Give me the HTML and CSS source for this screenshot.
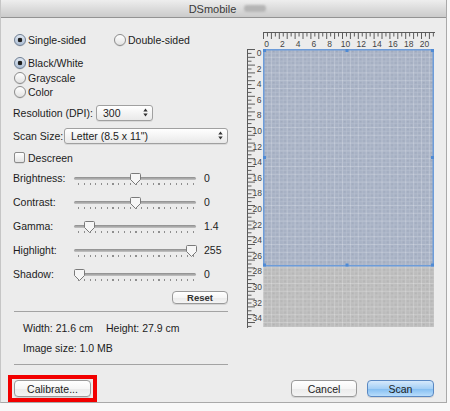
FILE: index.html
```html
<!DOCTYPE html>
<html>
<head>
<meta charset="utf-8">
<link rel="stylesheet" href="styles.css">
</head>
<body>
<div class="window">
  <div class="titlebar"><span class="title">DSmobile</span><span class="blur"></span></div>
  <div class="main">
    <div class="left">
      <div class="row sides">
        <label class="opt w100"><span class="radio on"></span>Single-sided</label>
        <label class="opt"><span class="radio"></span>Double-sided</label>
      </div>
      <div class="group">
        <label class="opt grp"><span class="radio on"></span>Black/White</label>
        <label class="opt grp"><span class="radio"></span>Grayscale</label>
        <label class="opt grp"><span class="radio"></span>Color</label>
      </div>
      <div class="row field res">
        <span class="flabel res-label">Resolution (DPI):</span>
        <div class="popup res-pop"><span>300</span><svg class="arrows" width="5" height="9" viewBox="0 0 5 9"><path d="M0.3 3.6 L2.5 0.4 L4.7 3.6 Z M0.3 5.4 L2.5 8.6 L4.7 5.4 Z"/></svg></div>
      </div>
      <div class="row field size">
        <span class="flabel size-label">Scan Size:</span>
        <div class="popup size-pop"><span>Letter (8.5 x 11")</span><svg class="arrows" width="5" height="9" viewBox="0 0 5 9"><path d="M0.3 3.6 L2.5 0.4 L4.7 3.6 Z M0.3 5.4 L2.5 8.6 L4.7 5.4 Z"/></svg></div>
      </div>
      <label class="row check"><span class="box"></span>Descreen</label>
      <div class="sliders">
        <div class="srow"><span class="slabel">Brightness:</span><div class="slider"><div class="track"></div><div class="ticks"></div><svg class="knob" style="left:55.5px" width="11" height="12" viewBox="0 0 11 12"><path d="M1.5 0.5 H9.5 A1 1 0 0 1 10.5 1.5 V6.5 L5.5 11.5 L0.5 6.5 V1.5 A1 1 0 0 1 1.5 0.5 Z"/></svg></div><span class="sval">0</span></div>
        <div class="srow"><span class="slabel">Contrast:</span><div class="slider"><div class="track"></div><div class="ticks"></div><svg class="knob" style="left:55.5px" width="11" height="12" viewBox="0 0 11 12"><path d="M1.5 0.5 H9.5 A1 1 0 0 1 10.5 1.5 V6.5 L5.5 11.5 L0.5 6.5 V1.5 A1 1 0 0 1 1.5 0.5 Z"/></svg></div><span class="sval">0</span></div>
        <div class="srow"><span class="slabel">Gamma:</span><div class="slider"><div class="track"></div><div class="ticks"></div><svg class="knob" style="left:9.5px" width="11" height="12" viewBox="0 0 11 12"><path d="M1.5 0.5 H9.5 A1 1 0 0 1 10.5 1.5 V6.5 L5.5 11.5 L0.5 6.5 V1.5 A1 1 0 0 1 1.5 0.5 Z"/></svg></div><span class="sval">1.4</span></div>
        <div class="srow"><span class="slabel">Highlight:</span><div class="slider"><div class="track"></div><div class="ticks"></div><svg class="knob" style="left:111.5px" width="11" height="12" viewBox="0 0 11 12"><path d="M1.5 0.5 H9.5 A1 1 0 0 1 10.5 1.5 V6.5 L5.5 11.5 L0.5 6.5 V1.5 A1 1 0 0 1 1.5 0.5 Z"/></svg></div><span class="sval">255</span></div>
        <div class="srow"><span class="slabel">Shadow:</span><div class="slider"><div class="track"></div><div class="ticks"></div><svg class="knob" style="left:-0.5px" width="11" height="12" viewBox="0 0 11 12"><path d="M1.5 0.5 H9.5 A1 1 0 0 1 10.5 1.5 V6.5 L5.5 11.5 L0.5 6.5 V1.5 A1 1 0 0 1 1.5 0.5 Z"/></svg></div><span class="sval">0</span></div>
      </div>
      <button class="btn reset">Reset</button>
      <div class="sep sep1"></div>
      <div class="info first"><span class="iw">Width: 21.6 cm</span><span>Height: 27.9 cm</span></div>
      <div class="info second">Image size: 1.0 MB</div>
      <div class="sep sep2"></div>
    </div>
    <div class="preview">
      <svg width="200" height="305" viewBox="0 0 200 305">
        <defs>
          <pattern id="tt" x="23" y="5" width="7.9" height="8" patternUnits="userSpaceOnUse">
            <rect x="0" y="0" width="1" height="6" fill="#5a5a5a"/>
            <rect x="3.95" y="0" width="1" height="3.5" fill="#5a5a5a"/>
          </pattern>
          <pattern id="lt" x="8" y="21" width="9" height="7.8" patternUnits="userSpaceOnUse">
            <rect x="0" y="0" width="7" height="1" fill="#5a5a5a"/>
            <rect x="0" y="3.9" width="3.5" height="1" fill="#5a5a5a"/>
          </pattern>
          <pattern id="grid" x="23" y="21" width="7.9" height="7.8" patternUnits="userSpaceOnUse">
            <rect x="0" y="0" width="7.9" height="1" fill="#ffffff" fill-opacity="0.22"/>
            <rect x="0" y="0" width="1" height="7.8" fill="#ffffff" fill-opacity="0.22"/>
            <rect x="1" y="3.9" width="6.9" height="1" fill="#ffffff" fill-opacity="0.09"/>
            <rect x="3.95" y="1" width="1" height="6.8" fill="#ffffff" fill-opacity="0.09"/>
            <rect x="2" y="2" width="1.5" height="1" fill="#000000" fill-opacity="0.06"/>
            <rect x="5.5" y="5.5" width="1.5" height="1" fill="#000000" fill-opacity="0.06"/>
          </pattern>
        </defs>
        <rect x="23" y="4" width="172" height="1" fill="#5a5a5a"/>
        <rect x="23" y="5" width="172" height="6" fill="url(#tt)"/>
        <g class="rnum" text-anchor="middle">
          <text x="26.5" y="18.5">0</text>
          <text x="42.3" y="18.5">2</text>
          <text x="58.1" y="18.5">4</text>
          <text x="73.9" y="18.5">6</text>
          <text x="89.7" y="18.5">8</text>
          <text x="105.5" y="18.5">10</text>
          <text x="121.3" y="18.5">12</text>
          <text x="137.1" y="18.5">14</text>
          <text x="152.9" y="18.5">16</text>
          <text x="168.7" y="18.5">18</text>
          <text x="184.5" y="18.5">20</text>
        </g>
        <rect x="7" y="21" width="1" height="279" fill="#5a5a5a"/>
        <rect x="8" y="21" width="8" height="279" fill="url(#lt)"/>
        <g class="rnum" text-anchor="end">
          <text x="21.5" y="28">0</text>
          <text x="21.5" y="43.6">2</text>
          <text x="21.5" y="59.2">4</text>
          <text x="21.5" y="74.8">6</text>
          <text x="21.5" y="90.4">8</text>
          <text x="22" y="106">10</text>
          <text x="22" y="121.6">12</text>
          <text x="22" y="137.2">14</text>
          <text x="22" y="152.8">16</text>
          <text x="22" y="168.4">18</text>
          <text x="22" y="184">20</text>
          <text x="22" y="199.6">22</text>
          <text x="22" y="215.2">24</text>
          <text x="22" y="230.8">26</text>
          <text x="22" y="246.4">28</text>
          <text x="22" y="262">30</text>
          <text x="22" y="277.6">32</text>
          <text x="22" y="293.2">34</text>
        </g>
        <rect x="23" y="21" width="171" height="217.5" fill="#a8b2c5"/>
        <rect x="23" y="238.5" width="171" height="60.5" fill="#bcbcbc"/>
        <rect x="23" y="21" width="171" height="278" fill="url(#grid)"/>
        <rect x="23.75" y="21.75" width="169.5" height="216" fill="none" stroke="#6d9cd9" stroke-width="1.5"/>
        <g fill="#4f8ad4">
          <rect x="23" y="21" width="3" height="3"/>
          <rect x="105.5" y="21" width="3" height="3"/>
          <rect x="191" y="21" width="3" height="3"/>
          <rect x="23" y="128" width="3" height="3"/>
          <rect x="191" y="128" width="3" height="3"/>
          <rect x="23" y="235.5" width="3" height="3"/>
          <rect x="105.5" y="235.5" width="3" height="3"/>
          <rect x="191" y="235.5" width="3" height="3"/>
        </g>
      </svg>
    </div>
  </div>
  <div class="footer">
    <div class="highlight"><button class="btn calib">Calibrate...</button></div>
    <button class="btn cancel">Cancel</button>
    <button class="btn scan">Scan</button>
  </div>
</div>
</body>
</html>
```
FILE: styles.css
```css
* { box-sizing: border-box; }

body {
  margin: 0;
  background: #f8f8f8;
  font-family: "Liberation Sans", Arial, sans-serif;
  font-size: 10.5px;
  color: #1c1c1c;
}

.window {
  width: 447px;
  height: 403px;
  background: #ececec;
  border-left: 1px solid #c6c6c6;
  border-right: 1px solid #a9a9a9;
  border-bottom: 1px solid #a9a9a9;
  display: flex;
  flex-direction: column;
}

.titlebar {
  height: 18px;
  border-bottom: 1px solid #939393;
  background: linear-gradient(#eeeeee, #dcdcdc 50%, #cbcbcb);
  display: flex;
  align-items: center;
  justify-content: center;
  padding-left: 8px;
}

.title {
  font-size: 11px;
  color: #3a3a3a;
}

.blur {
  width: 22px;
  height: 7px;
  margin-left: 8px;
  background: #b5b5b5;
  border-radius: 3px;
  filter: blur(1.3px);
}

.main {
  display: flex;
}

.left {
  width: 227px;
  padding: 15px 0 0 12px;
  display: flex;
  flex-direction: column;
}

.row {
  display: flex;
  align-items: center;
}

.sides {
  height: 14px;
}

.opt {
  display: flex;
  align-items: center;
  gap: 2px;
}

.w100 {
  width: 100px;
}

.group {
  margin-top: 9px;
  display: flex;
  flex-direction: column;
}

.grp {
  height: 14.5px;
}

.radio {
  width: 12px;
  height: 12px;
  margin-left: 1px;
  border-radius: 50%;
  border: 1px solid #8c8c8c;
  background: linear-gradient(#ffffff, #e2e2e2);
  box-shadow: 0 0.5px 0.5px rgba(0, 0, 0, 0.15);
}

.radio.on {
  border-color: #6f7f94;
  background: radial-gradient(circle, #1f1f1f 0 2px, transparent 2.6px), linear-gradient(#dfe7f1, #aebfd5);
}

.field {
  height: 16px;
}

.res {
  margin-top: 5px;
}

.size {
  margin-top: 7px;
}

.res-label {
  width: 83px;
  white-space: nowrap;
}

.size-label {
  width: 51px;
  white-space: nowrap;
}

.popup {
  height: 16px;
  border: 1px solid #a0a0a0;
  border-radius: 3px;
  background: linear-gradient(#ffffff, #f4f4f4 50%, #e9e9e9);
  box-shadow: 0 1px 0.5px rgba(0, 0, 0, 0.08);
  display: flex;
  align-items: center;
  justify-content: space-between;
  padding: 0 4px 0 6px;
}

.res-pop {
  width: 57px;
}

.size-pop {
  width: 164px;
}

.arrows {
  fill: #333333;
}

.check {
  margin-top: 8px;
  height: 12px;
  gap: 3px;
}

.box {
  width: 11px;
  height: 11px;
  margin-left: 1px;
  border: 1px solid #8c8c8c;
  border-radius: 2px;
  background: linear-gradient(#ffffff, #e4e4e4);
  box-shadow: 0 0.5px 0.5px rgba(0, 0, 0, 0.15);
}

.sliders {
  margin-top: 2px;
  display: flex;
  flex-direction: column;
}

.srow {
  height: 24px;
  display: flex;
  align-items: center;
}

.slabel {
  width: 61px;
}

.slider {
  position: relative;
  width: 122px;
  height: 24px;
  display: flex;
  flex-direction: column;
}

.track {
  margin-top: 11px;
  height: 3px;
  border-radius: 2px;
  background: linear-gradient(#8c8c8c, #c4c4c4);
}

.ticks {
  margin: 3px 2px 0 4px;
  height: 2px;
  background: repeating-linear-gradient(to right, #8e8e8e 0 1px, transparent 1px 5.75px);
}

.knob {
  position: absolute;
  top: 7px;
  fill: #f6f6f6;
  stroke: #7a7a7a;
  stroke-width: 1;
}

.sval {
  margin-left: 8px;
}

.btn {
  font-family: "Liberation Sans", Arial, sans-serif;
  font-size: 10.5px;
  color: #1c1c1c;
  height: 17px;
  padding: 0;
  border: 1px solid #9a9a9a;
  border-radius: 4px;
  background: linear-gradient(#ffffff, #f6f6f6 50%, #ebebeb 51%, #f4f4f4);
  box-shadow: 0 1px 0.5px rgba(0, 0, 0, 0.1);
}

.reset {
  align-self: flex-end;
  margin-top: 5px;
  width: 56px;
  height: 13px;
  font-size: 9.5px;
  font-weight: bold;
  color: #333333;
  line-height: 11px;
}

.sep {
  height: 1px;
  width: 214px;
  margin-left: 1px;
  background: #a3a3a3;
}

.sep1 {
  margin-top: 7px;
}

.sep2 {
  margin-top: 9px;
}

.info {
  height: 14px;
  padding-left: 10px;
  display: flex;
  align-items: center;
}

.info.first {
  margin-top: 9px;
}

.info.second {
  margin-top: 6px;
}

.iw {
  width: 83px;
}

.preview {
  margin: 10px 0 0 12px;
}

.preview svg {
  display: block;
}

.rnum {
  font-family: "Liberation Sans", Arial, sans-serif;
  font-size: 8.5px;
  fill: #444444;
}

.footer {
  margin-top: 10.5px;
  display: flex;
  align-items: center;
  padding: 0 12px 0 7px;
}

.highlight {
  border: 4px solid #f20000;
  padding: 1px 2px;
}

.calib {
  width: 77px;
  display: block;
}

.cancel {
  margin-left: auto;
  width: 66px;
}

.scan {
  margin-left: 10px;
  width: 67px;
  border-color: #5a88c2;
  background: linear-gradient(#d6eafc, #a6d0f6 50%, #82bdf1 51%, #b9ddfb);
}
```
